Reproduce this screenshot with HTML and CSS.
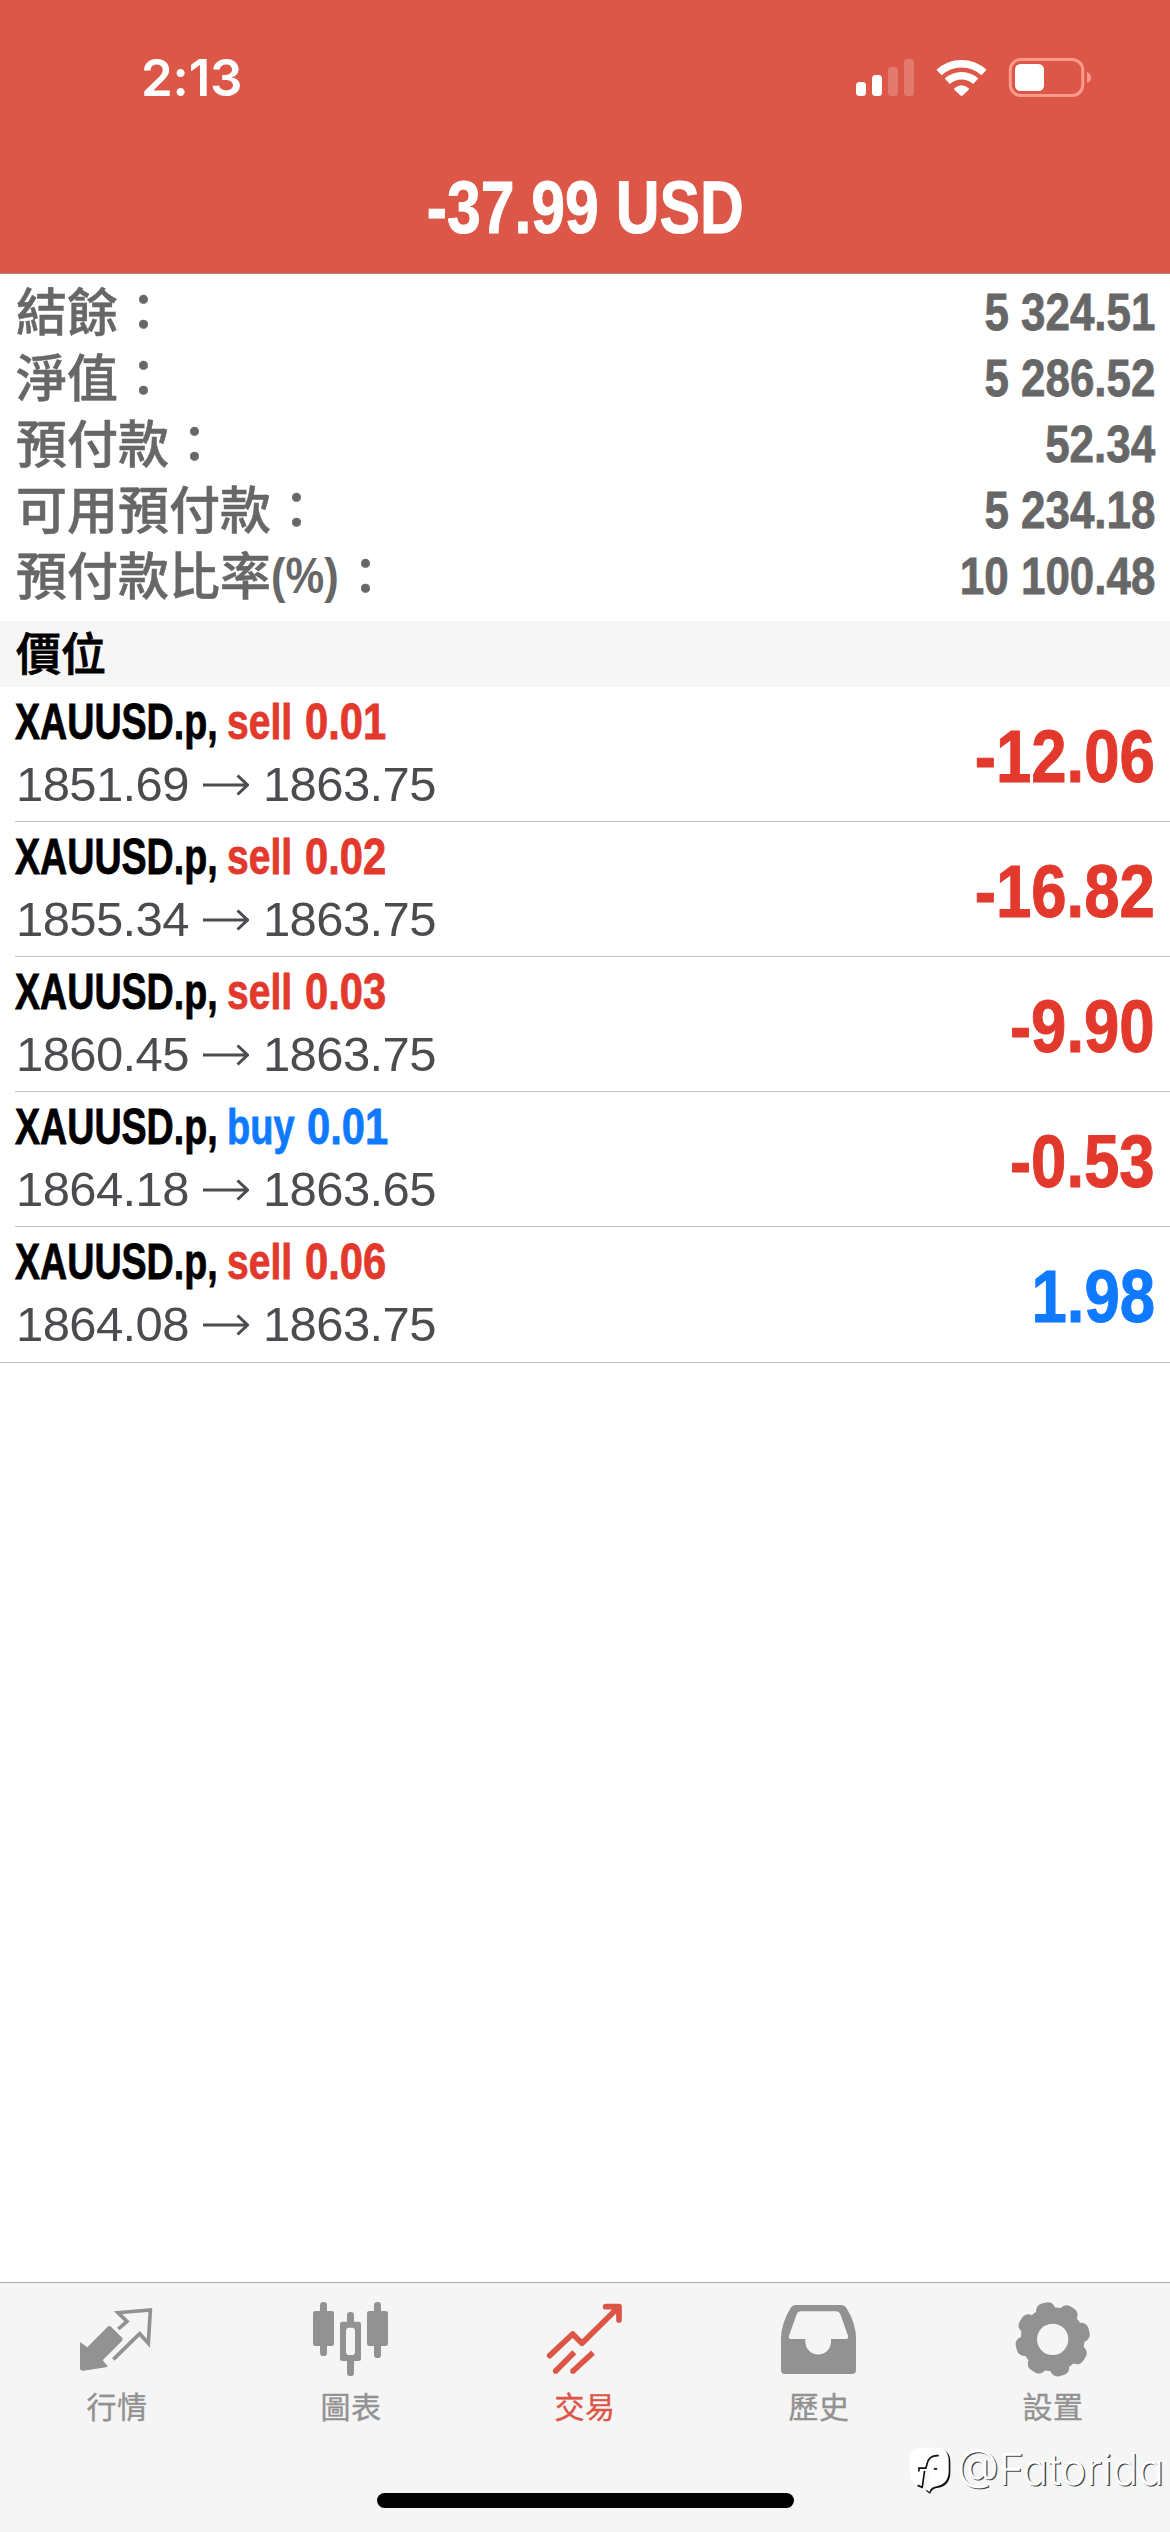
FILE: index.html
```html
<!DOCTYPE html>
<html lang="zh-Hant">
<head>
<meta charset="utf-8">
<title>交易</title>
<link rel="stylesheet" href="styles.css">
</head>
<body>
<div class="screen">
  <header class="header">
    <div class="status">
      <span class="time">2:13</span>
      <svg class="status-icons" viewBox="850 50 250 56" fill="#fff">
        <rect x="856" y="82" width="10" height="14" rx="3.5"/>
        <rect x="872" y="75" width="10" height="21" rx="3.5"/>
        <g opacity=".2"><rect x="888" y="67" width="10" height="29" rx="3.5"/><rect x="904" y="59" width="10" height="37" rx="3.5"/></g>
        <g fill="none" stroke="#fff" stroke-width="7.5"><path d="M939 72.5a33 33 0 0 1 45 0"/><path d="M947.3 81.3a21 21 0 0 1 28.4 0"/></g>
        <path d="M954.3 88.2q7.2-6 14.4 0q.7.8 0 1.6L962.6 95.600q-1 .8-2 0L954.300 89.800q-.7-.8 0-1.600z"/>
        <rect x="1010.300" y="59.500" width="72.500" height="36" rx="10.500" fill="none" stroke="#ff9a8c" stroke-width="3"/>
        <rect x="1015" y="64" width="29" height="27" rx="5.500"/>
        <path d="M1087 72q4 1.500 4 5.500t-4 5.500z" fill="#ff9a8c"/>
      </svg>
    </div>
    <h1 class="total"><span>-37.99 USD</span></h1>
  </header>

  <dl class="balance">
    <div><dt>結餘：</dt><dd>5 324.51</dd></div>
    <div><dt>淨值：</dt><dd>5 286.52</dd></div>
    <div><dt>預付款：</dt><dd>52.34</dd></div>
    <div><dt>可用預付款：</dt><dd>5 234.18</dd></div>
    <div><dt>預付款比率<span class="pct">(%)</span>：</dt><dd>10 100.48</dd></div>
  </dl>

  <h2 class="section">價位</h2>

  <ul class="positions">
    <li class="position">
      <div>
        <div class="deal"><span class="symbol">XAUUSD.p,</span><span class="side sell">sell</span><span class="lots sell">0.01</span></div>
        <div class="price">1851.69<svg class="arrow" viewBox="0 0 46 22"><path d="M0 11H44M34.500 1.500L44.500 11L34.500 20.500"/></svg>1863.75</div>
      </div>
      <div class="profit sell">-12.06</div>
    </li>
    <li class="position">
      <div>
        <div class="deal"><span class="symbol">XAUUSD.p,</span><span class="side sell">sell</span><span class="lots sell">0.02</span></div>
        <div class="price">1855.34<svg class="arrow" viewBox="0 0 46 22"><path d="M0 11H44M34.500 1.500L44.500 11L34.500 20.500"/></svg>1863.75</div>
      </div>
      <div class="profit sell">-16.82</div>
    </li>
    <li class="position">
      <div>
        <div class="deal"><span class="symbol">XAUUSD.p,</span><span class="side sell">sell</span><span class="lots sell">0.03</span></div>
        <div class="price">1860.45<svg class="arrow" viewBox="0 0 46 22"><path d="M0 11H44M34.500 1.500L44.500 11L34.500 20.500"/></svg>1863.75</div>
      </div>
      <div class="profit sell">-9.90</div>
    </li>
    <li class="position">
      <div>
        <div class="deal"><span class="symbol">XAUUSD.p,</span><span class="side side-buy buy">buy</span><span class="lots buy">0.01</span></div>
        <div class="price">1864.18<svg class="arrow" viewBox="0 0 46 22"><path d="M0 11H44M34.500 1.500L44.500 11L34.500 20.500"/></svg>1863.65</div>
      </div>
      <div class="profit sell">-0.53</div>
    </li>
    <li class="position">
      <div>
        <div class="deal"><span class="symbol">XAUUSD.p,</span><span class="side sell">sell</span><span class="lots sell">0.06</span></div>
        <div class="price">1864.08<svg class="arrow" viewBox="0 0 46 22"><path d="M0 11H44M34.500 1.500L44.500 11L34.500 20.500"/></svg>1863.75</div>
      </div>
      <div class="profit buy">1.98</div>
    </li>
  </ul>

  <footer class="footer">
    <nav class="tabs">
      <a class="tab">
        <svg viewBox="231 90 240 234"><path fill="currentColor" d="M240 216L262 232L323 170Q328 166 333 170L367 204Q370 209 366 213L308 271L322 287Q324 291 318 292L250 302Q240 303 240 294Z"/><path fill="none" stroke="currentColor" stroke-width="11" d="M355 177L381 154L354 128L451 120L445 220L419 191L340 268"/></svg>
        <span>行情</span>
      </a>
      <a class="tab">
        <svg viewBox="933 90 240 234" fill="currentColor"><rect x="939" y="123" width="63" height="105" rx="7"/><rect x="960" y="96" width="21" height="162" rx="10"/><rect x="1101" y="123" width="63" height="105" rx="7"/><rect x="1122" y="96" width="21" height="168" rx="10"/><rect x="1020" y="155" width="63" height="118" rx="7"/><rect x="1041" y="126" width="21" height="192" rx="10"/><rect x="1038" y="173" width="27" height="82" rx="10" fill="#f5f5f5"/></svg>
        <span>圖表</span>
      </a>
      <a class="tab active">
        <svg viewBox="435 90 240 234" fill="none" stroke="currentColor" stroke-width="17"><path stroke-linecap="round" stroke-linejoin="round" d="M449 257L518 192L546 220L650 117M617 110H657V150"/><path fill="currentColor" stroke="none" d="M622 106H662V146Z"/><path d="M467 303L523 247M519 303L579 248"/><g fill="currentColor" stroke="none"><circle cx="467" cy="303" r="8.500"/><circle cx="519" cy="303" r="8.500"/></g></svg>
        <span>交易</span>
      </a>
      <a class="tab">
        <svg viewBox="27 90 240 234"><path fill="currentColor" fill-rule="evenodd" d="M76 105H214Q224 105 229 113Q258 160 258 204V300Q258 312 246 312H45Q33 312 33 300V204Q34 160 62 113Q67 105 76 105ZM93 124Q84 124 80 133L57 197Q55 207 64 207H106V215A38.500 38.500 0 0 0 183 215V207H227Q236 207 234 197L211 133Q207 124 197 124Z"/></svg>
        <span>歷史</span>
      </a>
      <a class="tab">
        <svg viewBox="729 90 240 234"><g fill="currentColor" transform="translate(848 208)"><circle r="96"/><rect x="-29" y="-112" width="58" height="224" rx="22" transform="rotate(31.500)"/><rect x="-29" y="-112" width="58" height="224" rx="22" transform="rotate(76.500)"/><rect x="-29" y="-112" width="58" height="224" rx="22" transform="rotate(121.500)"/><rect x="-29" y="-112" width="58" height="224" rx="22" transform="rotate(166.500)"/><circle r="47" fill="#f5f5f5"/></g></svg>
        <span>設置</span>
      </a>
    </nav>
    <div class="home-indicator"></div>
  </footer>

  <div class="watermark">
    <svg viewBox="28 34 130 146"><path d="M66 42Q32 43 33 82V112Q32 146 58 158L92 177Q96 164 112 160Q153 154 153 112V82Q153 44 118 42Z" fill="#111"/><path d="M66 38Q30 38 30 78V112Q30 158 76 162L90 172Q92 158 108 155Q148 150 148 108V78Q148 38 110 38Z" fill="#fff"/><path d="M30 120L54 152L72 160L88 178H28Z" fill="#f5f5f5"/><path d="M30 100V112Q30 142 52 152L70 162L76 108Z" fill="#fff"/><path d="M77 106L90 108L80 170L66 160Z" fill="#f5f5f5"/><path d="M118 62C94 60 86 72 83 86L79 100H58V110M75 108L68 158L54 152M103 102H113" fill="none" stroke="#111" stroke-width="5"/></svg>
    <span>@Fatorida</span>
  </div>
</div>
</body>
</html>
```
FILE: styles.css
```css
* { box-sizing: border-box; margin: 0; padding: 0; }

body {
  background: #fff;
  font-family: "Liberation Sans", "Noto Sans CJK TC", sans-serif;
}

.screen {
  position: relative;
  display: flex;
  flex-direction: column;
  width: 1170px;
  height: 2532px;
  overflow: hidden;
  background: #fff;
}

.sell { color: #e2392c; }
.buy { color: #0f7aff; }

/* Header */
.header {
  height: 274px;
  background: #dd5748;
  border-bottom: 1px solid #b5877f;
  color: #fff;
}
.status {
  display: flex;
  justify-content: space-between;
  height: 141px;
  padding: 48px 70px 0 141px;
}
.time {
  font: 600 51px/60px Inter, sans-serif;
  letter-spacing: -.2px;
}
.status-icons { width: 250px; height: 56px; margin-top: 2px; }
.total {
  display: flex;
  justify-content: center;
  font-size: 74px;
  line-height: 134px;
}
.total span {
  transform: scaleX(.82);
  white-space: nowrap;
  -webkit-text-stroke: 1px currentColor;
}

/* Account summary */
.balance {
  height: 347px;
  padding: 5px 15px 0 16px;
  color: #676767;
}
.balance > div { display: flex; justify-content: space-between; height: 66px; }
.balance dt {
  display: flex;
  font: 500 51px/60px "Noto Sans CJK TC", sans-serif;
  -webkit-text-stroke: .5px currentColor;
}
.balance dd {
  font-size: 52px;
  font-weight: 700;
  line-height: 66px;
  -webkit-text-stroke: .8px currentColor;
  transform: scaleX(.845);
  transform-origin: right;
}
.pct {
  width: 69px;
  font: 700 50px/66px "Liberation Sans", sans-serif;
  -webkit-text-stroke: 0;
  transform: scaleX(.87);
  transform-origin: left;
}

.section {
  height: 66px;
  padding-left: 16px;
  background: #f6f6f6;
  font: 500 45px/62px "Noto Sans CJK TC", sans-serif;
  -webkit-text-stroke: .8px currentColor;
}

/* Open positions */
.positions { flex: 1; list-style: none; }
.position {
  display: flex;
  justify-content: space-between;
  height: 135px;
  margin-left: 15px;
  padding: 5px 15px 0 0;
  border-bottom: 1px solid #bfc0c2;
}
.position:last-child { height: 136px; margin-left: 0; padding-left: 15px; }
.deal {
  display: flex;
  font-size: 50px;
  font-weight: 700;
  line-height: 60px;
  white-space: nowrap;
  -webkit-text-stroke: .8px currentColor;
}
.deal span { transform-origin: left; }
.symbol { width: 212px; transform: scaleX(.752); }
.side { width: 78px; transform: scaleX(.78); }
.side-buy { width: 80px; transform: scaleX(.76); }
.lots { width: 100px; transform: scaleX(.835); }
.price {
  display: flex;
  align-items: center;
  padding-left: 1px;
  font-size: 49px;
  line-height: 65px;
  letter-spacing: -.6px;
  color: #4c4c50;
}
.arrow {
  width: 46px;
  height: 22px;
  margin: 0 14px;
  fill: none;
  stroke: currentColor;
  stroke-width: 3;
}
.profit {
  font-size: 74px;
  font-weight: 700;
  line-height: 129px;
  -webkit-text-stroke: 1px currentColor;
  transform: scaleX(.858);
  transform-origin: right;
}

/* Tab bar */
.footer {
  display: flex;
  flex-direction: column;
  align-items: center;
  justify-content: space-between;
  height: 250px;
  padding-bottom: 24px;
  background: #f5f5f5;
  border-top: 1px solid #a9a9a9;
}
.tabs { display: flex; width: 100%; }
.tab {
  flex: 1;
  display: flex;
  flex-direction: column;
  align-items: center;
  padding-top: 17px;
  color: #929292;
  font: 400 30px/44px "Noto Sans CJK TC", sans-serif;
  letter-spacing: .5px;
  -webkit-text-stroke: .4px currentColor;
}
.tab svg { width: 80px; height: 78px; margin-bottom: 5px; }
.active { color: #dd5547; }
.home-indicator { width: 417px; height: 15px; border-radius: 8px; background: #000; }

.watermark {
  position: absolute;
  left: 909px;
  top: 2446px;
  display: flex;
  gap: 5px;
  color: #fff;
  font: 300 43px/46px Inter, sans-serif;
  font-feature-settings: "cv11";
  text-shadow: 1.3px 1.3px 0 #444;
}
.watermark svg { width: 43px; height: 49px; }
```
